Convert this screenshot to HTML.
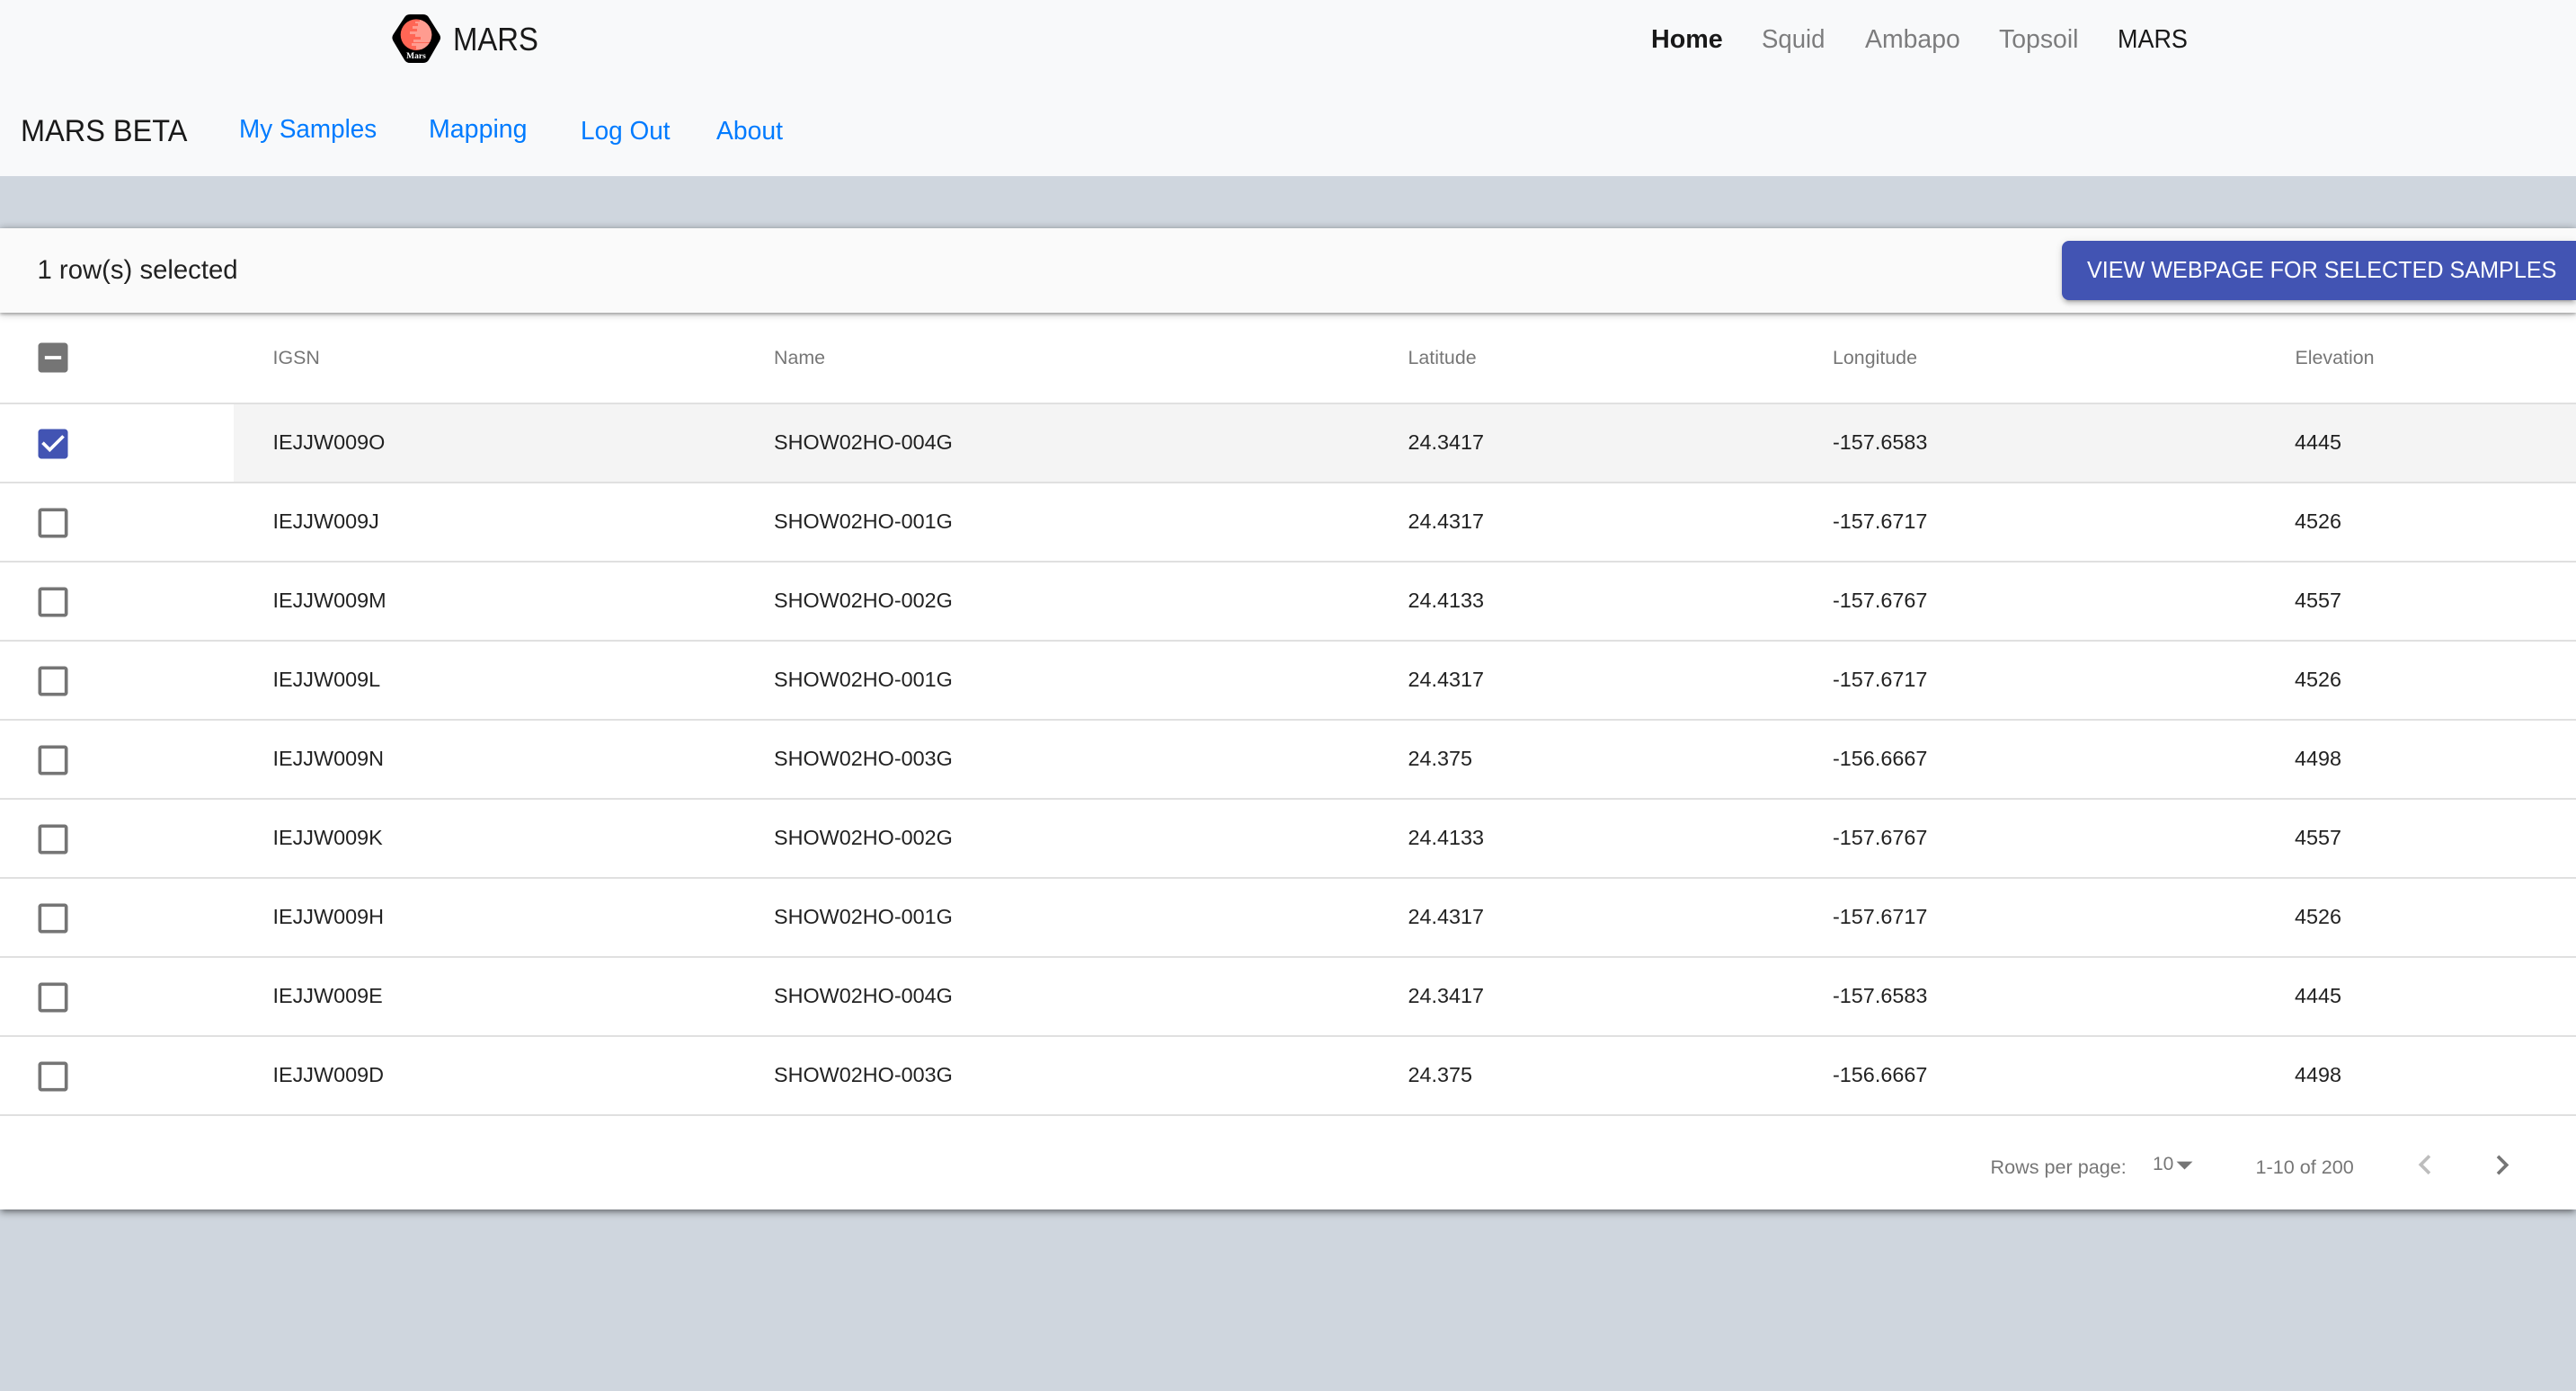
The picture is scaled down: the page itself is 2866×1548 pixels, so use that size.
<!DOCTYPE html>
<html lang="en">
<head>
<meta charset="utf-8">
<title>MARS BETA</title>
<style>
*{box-sizing:border-box}
html,body{margin:0;padding:0;width:2866px;height:1548px;overflow:hidden;background:#cfd6de;font-family:"Liberation Sans",Arial,sans-serif}
.a{position:absolute;white-space:nowrap;transform-origin:0 50%;line-height:40px;height:40px}
#hdr{position:absolute;left:0;top:0;width:2866px;height:196px;background:#f8f9fa}
.nav{font-size:29px}
.blue{color:#007bff}
.dark{color:rgba(0,0,0,.9)}
.gray{color:rgba(0,0,0,.5)}
#paper{position:absolute;left:0;top:254px;width:2866px;height:1092px;background:#fff;box-shadow:0 2px 10px rgba(0,0,0,.25),0 4px 6px rgba(0,0,0,.2),0 6px 3px -4px rgba(0,0,0,.12)}
#tb{position:absolute;left:0;top:254px;width:2866px;height:94px;background:#fafafa;box-shadow:0 2px 9px rgba(0,0,0,.2),0 2px 3px rgba(0,0,0,.25)}
#btn{position:absolute;left:2294px;top:268px;width:572px;height:66px;background:#4254b3;border-radius:8px 0 0 8px;box-shadow:0 4px 4px rgba(0,0,0,.14),0 5px 2px -4px rgba(0,0,0,.2),0 2px 9px rgba(0,0,0,.12)}
.row{position:absolute;left:0;width:2866px;height:88px;border-bottom:2px solid #e0e0e0}
.sel{position:absolute;left:260px;top:0;right:0;bottom:0;background:#f4f4f4}
.c{position:absolute;white-space:nowrap;font-size:23.4px;line-height:40px;top:22px;color:rgba(0,0,0,.87)}
.h{position:absolute;white-space:nowrap;font-size:21.4px;line-height:40px;top:378px;color:rgba(0,0,0,.54);transform-origin:0 50%}
.c1{left:303.5px}.c2{left:861px}.c3{left:1566.5px}.c4{left:2039px}.c5{left:2553px}
.cb{position:absolute;left:37px;top:21.500px;width:44px;height:44px}
.ft{position:absolute;white-space:nowrap;font-size:21.6px;line-height:30px;color:rgba(0,0,0,.54)}
</style>
</head>
<body>
<div id="hdr"></div>

<svg style="position:absolute;left:430px;top:10px" width="66" height="66" viewBox="430 10 66 66">
  <defs><clipPath id="pl"><circle cx="463" cy="38.7" r="17.3"/></clipPath></defs>
  <path d="M443.500 42L456 23H471L483 42L471 63H456Z" fill="#000" stroke="#000" stroke-width="14" stroke-linejoin="round"/>
  <circle cx="463" cy="38.7" r="17.3" fill="#ff6655"/>
  <g clip-path="url(#pl)" fill="#ff9c90">
    <rect x="467" y="21" width="14" height="3"/>
    <rect x="462" y="24" width="19" height="2"/>
    <rect x="465" y="26" width="16" height="3"/>
    <rect x="459" y="29" width="22" height="3"/>
    <rect x="464" y="32" width="17" height="3"/>
    <rect x="456" y="35" width="25" height="3"/>
    <rect x="462" y="38" width="19" height="3"/>
    <rect x="468" y="41" width="13" height="3"/>
    <rect x="460" y="44" width="21" height="3"/>
    <rect x="458" y="48" width="23" height="3"/>
    <rect x="463" y="51" width="18" height="4"/>
  </g>
  <text x="463" y="65" text-anchor="middle" font-family="Liberation Serif,serif" font-weight="700" font-size="9.500" fill="#fff">Mars</text>
</svg>

<div class="a nav dark" style="left:503.500px;top:24px;font-size:36px;transform:scaleX(.913)">MARS</div>
<div class="a nav" style="left:1837px;top:24px;font-weight:700;color:rgba(0,0,0,.9);transform:scaleX(.99)">Home</div>
<div class="a nav gray" style="left:1960px;top:24px;transform:scaleX(.95)">Squid</div>
<div class="a nav gray" style="left:2075px;top:24px;transform:scaleX(.98)">Ambapo</div>
<div class="a nav gray" style="left:2224px;top:24px;transform:scaleX(.98)">Topsoil</div>
<div class="a nav dark" style="left:2356px;top:24px;transform:scaleX(.93)">MARS</div>

<div class="a nav dark" style="left:23px;top:126px;font-size:34.500px;transform:scaleX(.942)">MARS BETA</div>
<div class="a nav blue" style="left:266px;top:124px;transform:scaleX(.96)">My Samples</div>
<div class="a nav blue" style="left:477px;top:124px;transform:scaleX(.985)">Mapping</div>
<div class="a nav blue" style="left:646px;top:126px;transform:scaleX(.965)">Log Out</div>
<div class="a nav blue" style="left:797px;top:126px;transform:scaleX(.976)">About</div>

<div id="paper"></div>

<div class="h" style="left:303.500px">IGSN</div>
<div class="h" style="left:861px">Name</div>
<div class="h" style="left:1566.500px">Latitude</div>
<div class="h" style="left:2039px">Longitude</div>
<div class="h" style="left:2553.500px">Elevation</div>

<svg class="cb" style="top:376px" viewBox="0 0 24 24"><path fill="#757575" d="M19 3H5c-1.100 0-2 .9-2 2v14c0 1.100.9 2 2 2h14c1.100 0 2-.9 2-2V5c0-1.100-.9-2-2-2zm-2 10H7v-2h10v2z"/></svg>

<div class="row" style="top:448px;height:2px;border-bottom:2px solid #e0e0e0"></div>

<div class="row" style="top:450px"><div class="sel"></div><svg class="cb" viewBox="0 0 24 24"><path fill="#4254b3" d="M19 3H5c-1.110 0-2 .9-2 2v14c0 1.100.89 2 2 2h14c1.110 0 2-.9 2-2V5c0-1.100-.89-2-2-2zm-9 14l-5-5 1.410-1.410L10 14.170l7.590-7.590L19 8l-9 9z"/></svg><div class="c c1">IEJJW009O</div><div class="c c2">SHOW02HO-004G</div><div class="c c3">24.3417</div><div class="c c4">-157.6583</div><div class="c c5">4445</div></div>

<div class="row" style="top:538px"><svg class="cb" viewBox="0 0 24 24"><path fill="#757575" d="M19 5v14H5V5h14m0-2H5c-1.100 0-2 .9-2 2v14c0 1.100.9 2 2 2h14c1.100 0 2-.9 2-2V5c0-1.100-.9-2-2-2z"/></svg><div class="c c1">IEJJW009J</div><div class="c c2">SHOW02HO-001G</div><div class="c c3">24.4317</div><div class="c c4">-157.6717</div><div class="c c5">4526</div></div>

<div class="row" style="top:626px"><svg class="cb" viewBox="0 0 24 24"><path fill="#757575" d="M19 5v14H5V5h14m0-2H5c-1.100 0-2 .9-2 2v14c0 1.100.9 2 2 2h14c1.100 0 2-.9 2-2V5c0-1.100-.9-2-2-2z"/></svg><div class="c c1">IEJJW009M</div><div class="c c2">SHOW02HO-002G</div><div class="c c3">24.4133</div><div class="c c4">-157.6767</div><div class="c c5">4557</div></div>

<div class="row" style="top:714px"><svg class="cb" viewBox="0 0 24 24"><path fill="#757575" d="M19 5v14H5V5h14m0-2H5c-1.100 0-2 .9-2 2v14c0 1.100.9 2 2 2h14c1.100 0 2-.9 2-2V5c0-1.100-.9-2-2-2z"/></svg><div class="c c1">IEJJW009L</div><div class="c c2">SHOW02HO-001G</div><div class="c c3">24.4317</div><div class="c c4">-157.6717</div><div class="c c5">4526</div></div>

<div class="row" style="top:802px"><svg class="cb" viewBox="0 0 24 24"><path fill="#757575" d="M19 5v14H5V5h14m0-2H5c-1.100 0-2 .9-2 2v14c0 1.100.9 2 2 2h14c1.100 0 2-.9 2-2V5c0-1.100-.9-2-2-2z"/></svg><div class="c c1">IEJJW009N</div><div class="c c2">SHOW02HO-003G</div><div class="c c3">24.375</div><div class="c c4">-156.6667</div><div class="c c5">4498</div></div>

<div class="row" style="top:890px"><svg class="cb" viewBox="0 0 24 24"><path fill="#757575" d="M19 5v14H5V5h14m0-2H5c-1.100 0-2 .9-2 2v14c0 1.100.9 2 2 2h14c1.100 0 2-.9 2-2V5c0-1.100-.9-2-2-2z"/></svg><div class="c c1">IEJJW009K</div><div class="c c2">SHOW02HO-002G</div><div class="c c3">24.4133</div><div class="c c4">-157.6767</div><div class="c c5">4557</div></div>

<div class="row" style="top:978px"><svg class="cb" viewBox="0 0 24 24"><path fill="#757575" d="M19 5v14H5V5h14m0-2H5c-1.100 0-2 .9-2 2v14c0 1.100.9 2 2 2h14c1.100 0 2-.9 2-2V5c0-1.100-.9-2-2-2z"/></svg><div class="c c1">IEJJW009H</div><div class="c c2">SHOW02HO-001G</div><div class="c c3">24.4317</div><div class="c c4">-157.6717</div><div class="c c5">4526</div></div>

<div class="row" style="top:1066px"><svg class="cb" viewBox="0 0 24 24"><path fill="#757575" d="M19 5v14H5V5h14m0-2H5c-1.100 0-2 .9-2 2v14c0 1.100.9 2 2 2h14c1.100 0 2-.9 2-2V5c0-1.100-.9-2-2-2z"/></svg><div class="c c1">IEJJW009E</div><div class="c c2">SHOW02HO-004G</div><div class="c c3">24.3417</div><div class="c c4">-157.6583</div><div class="c c5">4445</div></div>

<div class="row" style="top:1154px"><svg class="cb" viewBox="0 0 24 24"><path fill="#757575" d="M19 5v14H5V5h14m0-2H5c-1.100 0-2 .9-2 2v14c0 1.100.9 2 2 2h14c1.100 0 2-.9 2-2V5c0-1.100-.9-2-2-2z"/></svg><div class="c c1">IEJJW009D</div><div class="c c2">SHOW02HO-003G</div><div class="c c3">24.375</div><div class="c c4">-156.6667</div><div class="c c5">4498</div></div>

<div id="tb"></div>
<div class="a" style="left:41.500px;top:281px;font-size:29.300px;color:rgba(0,0,0,.87)">1 row(s) selected</div>
<div id="btn"></div>
<div class="a" style="left:2322px;top:281px;font-size:25.600px;color:#fff;transform:scaleX(.983)">VIEW WEBPAGE FOR SELECTED SAMPLES</div>

<div class="ft" style="left:2214.500px;top:1284px">Rows per page:</div>
<div class="ft" style="left:2395px;top:1281px;font-size:21px">10</div>
<svg style="position:absolute;left:2417.500px;top:1288.500px" width="25" height="25" viewBox="5 8 14 14"><path fill="#757575" d="M7 10l5 5 5-5z"/></svg>
<div class="ft" style="left:2509.500px;top:1284px">1-10 of 200</div>
<svg style="position:absolute;left:2676px;top:1275px" width="44" height="44" viewBox="0 0 24 24"><path fill="rgba(0,0,0,.26)" d="M15.410 16.090l-4.580-4.590 4.580-4.590L14 5.500l-6 6 6 6z"/></svg>
<svg style="position:absolute;left:2762px;top:1275px" width="44" height="44" viewBox="0 0 24 24"><path fill="#757575" d="M8.590 16.340l4.580-4.580-4.580-4.590L10 5.750l6 6-6 6z"/></svg>
</body>
</html>
